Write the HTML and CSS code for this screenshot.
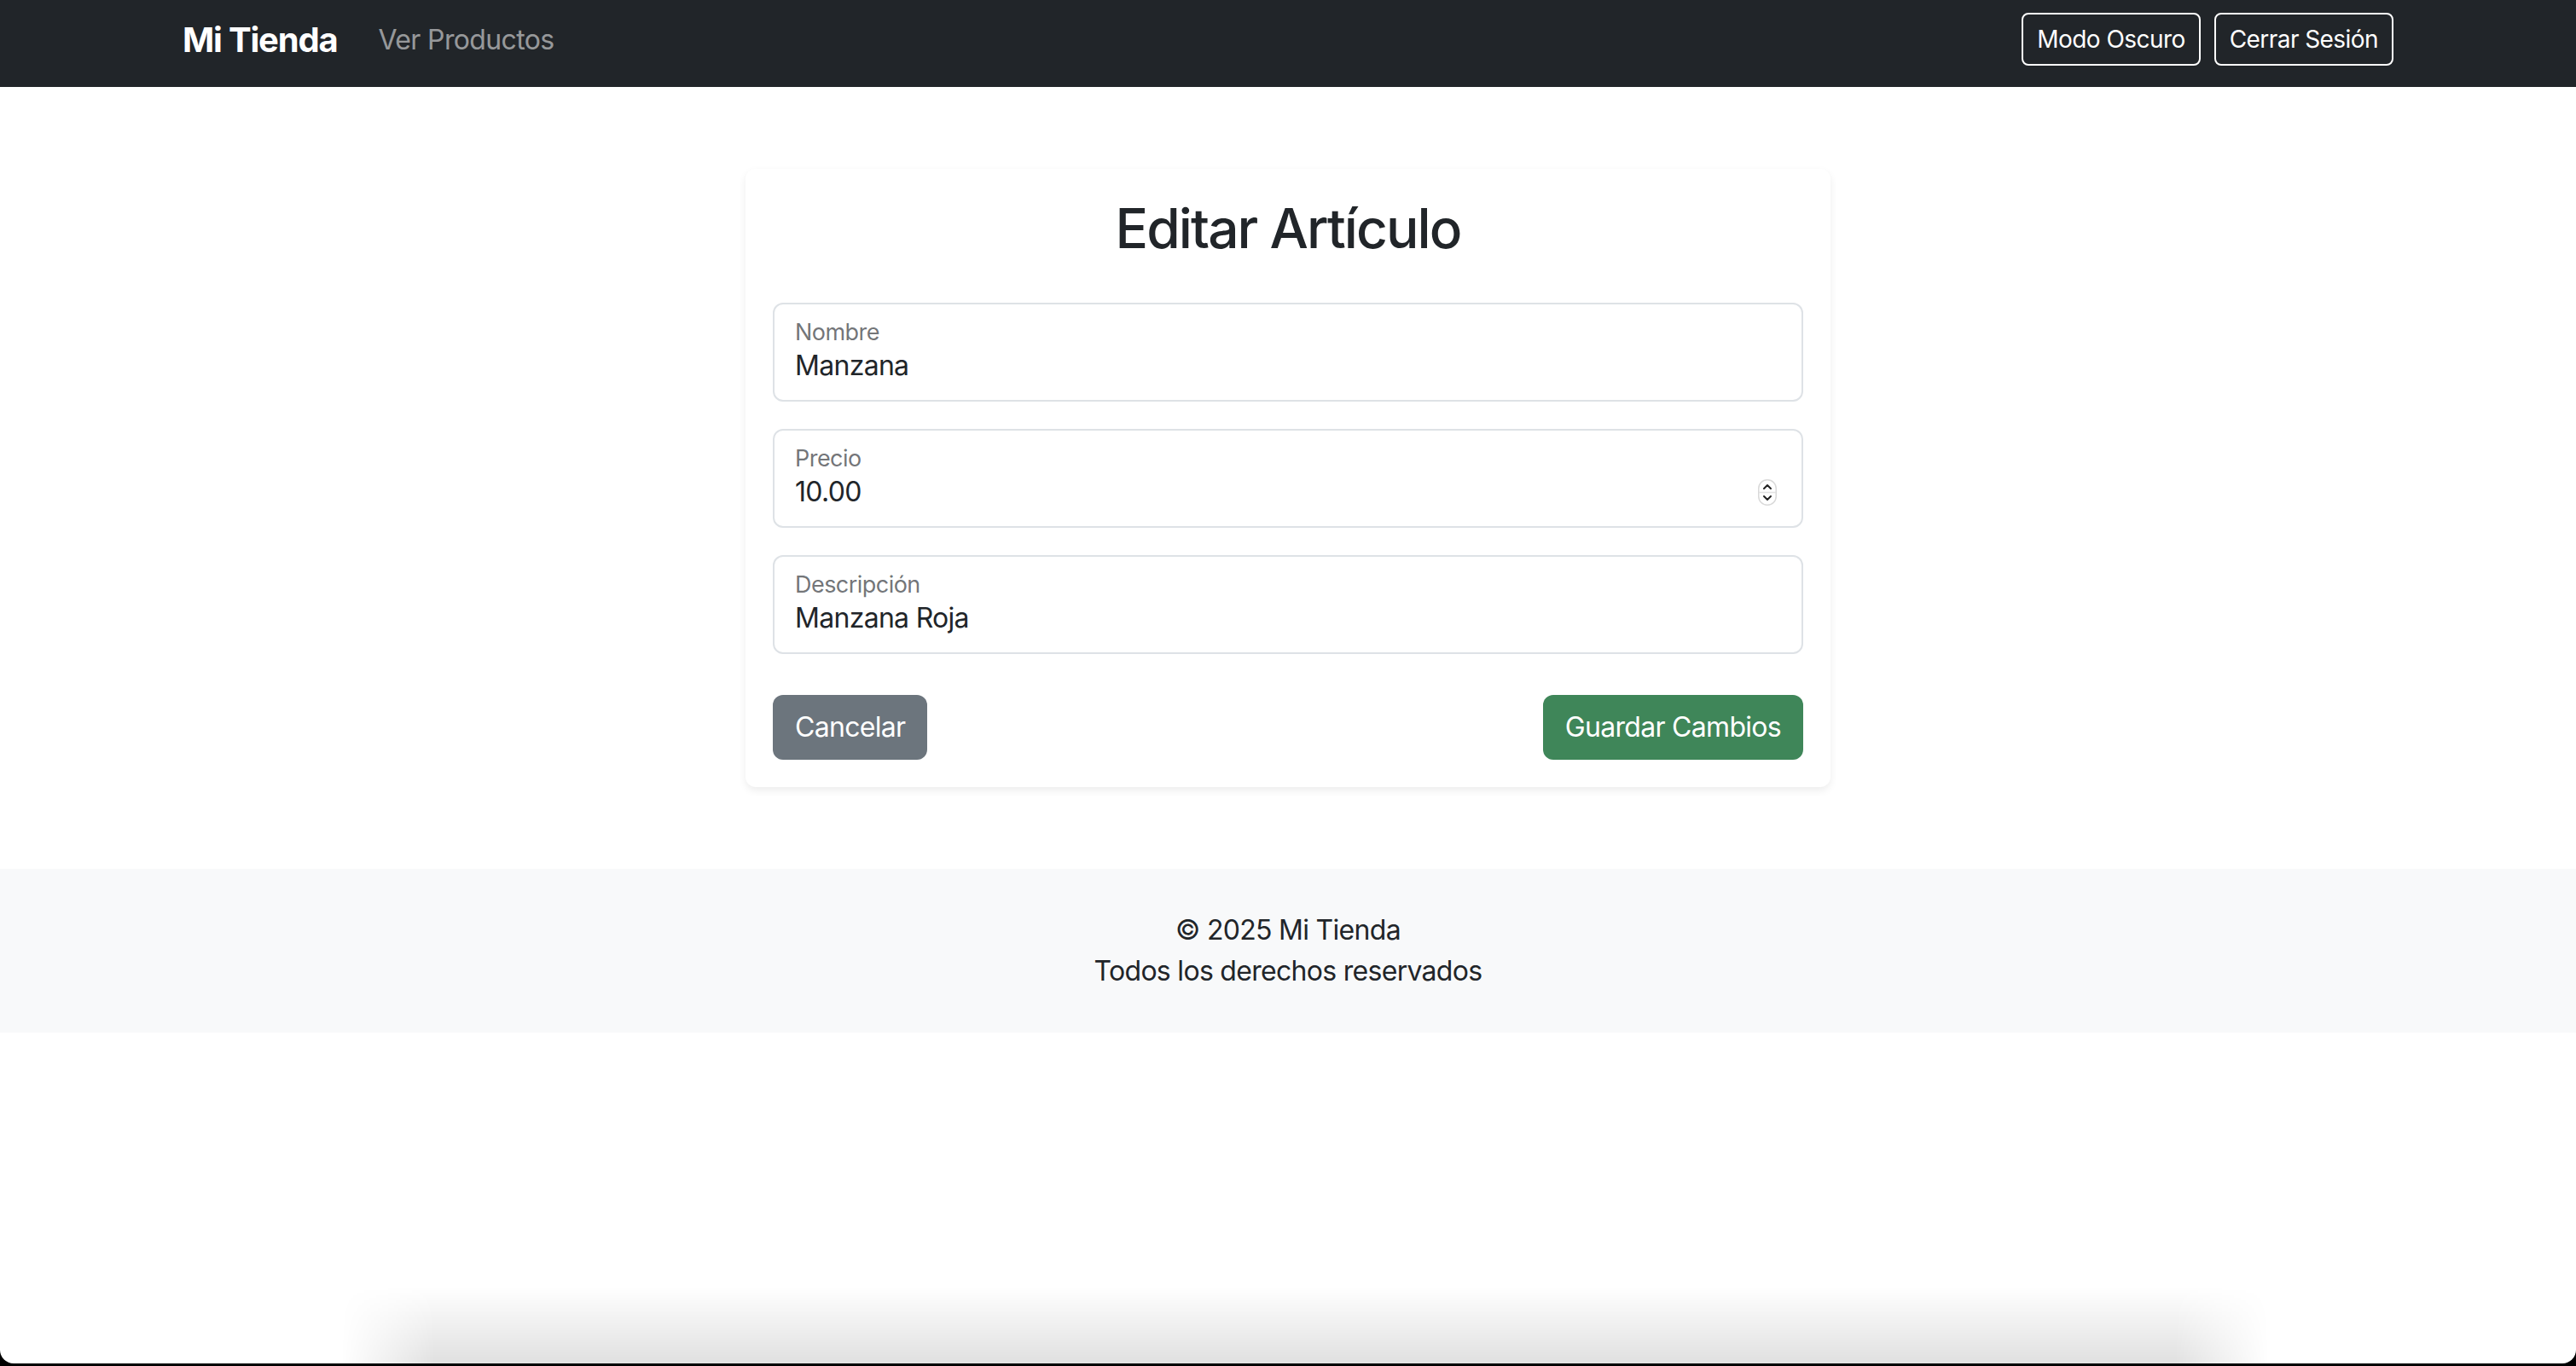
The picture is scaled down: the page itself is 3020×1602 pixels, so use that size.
FILE: index.html
```html
<!DOCTYPE html>
<html lang="es">
<head>
<meta charset="utf-8">
<title>Editar Artículo - Mi Tienda</title>
<link rel="stylesheet" href="styles.css">
</head>
<body>
<nav class="navbar">
  <div class="container nav-inner">
    <div class="nav-left">
      <a class="brand" href="#">Mi Tienda</a>
      <a class="nav-link" href="#">Ver Productos</a>
    </div>
    <div class="nav-right">
      <button class="btn-outline" type="button">Modo Oscuro</button>
      <button class="btn-outline" type="button">Cerrar Sesión</button>
    </div>
  </div>
</nav>

<main class="container main">
  <div class="card">
    <h2 class="card-title">Editar Artículo</h2>
    <form class="form">
      <div class="field">
        <input class="field-input" type="text" id="nombre" value="Manzana">
        <label class="field-label" for="nombre">Nombre</label>
      </div>
      <div class="field">
        <input class="field-input" type="number" id="precio" value="10.00" step="0.01">
        <label class="field-label" for="precio">Precio</label>
        <span class="spinner" aria-hidden="true">
          <svg width="22" height="31" viewBox="0 0 22 31">
            <rect x="0.75" y="0.75" width="20.5" height="29.5" rx="10" fill="#fff" stroke="#d9d9d9" stroke-width="1.5"/>
            <line x1="1" y1="15.5" x2="21" y2="15.5" stroke="#e2e2e2" stroke-width="1.5"/>
            <path d="M7 11 L11 7 L15 11" fill="none" stroke="#222" stroke-width="2" stroke-linecap="round" stroke-linejoin="round"/>
            <path d="M7 20 L11 24 L15 20" fill="none" stroke="#222" stroke-width="2" stroke-linecap="round" stroke-linejoin="round"/>
          </svg>
        </span>
      </div>
      <div class="field">
        <input class="field-input" type="text" id="descripcion" value="Manzana Roja">
        <label class="field-label" for="descripcion">Descripción</label>
      </div>
      <div class="actions">
        <button class="btn btn-secondary" type="button">Cancelar</button>
        <button class="btn btn-success" type="submit">Guardar Cambios</button>
      </div>
    </form>
  </div>
</main>

<footer class="footer">
  <p class="footer-line">© 2025 Mi Tienda</p>
  <p class="footer-line">Todos los derechos reservados</p>
</footer>

<div class="screen-edge"><div class="screen-edge-inner"></div></div>
<div class="screen-shadow"></div>
</body>
</html>
```

FILE: styles.css
```css
* { box-sizing: border-box; }

html, body {
  margin: 0;
  padding: 0;
  background: #fff;
  color: #212529;
  font-family: Inter, "Noto Sans", "Liberation Sans", sans-serif;
  font-size: 32px;
  line-height: 1.5;
  letter-spacing: -0.022em;
}

.container {
  width: 2640px;
  margin: 0 auto;
  padding: 0 24px;
}

/* Navbar */
.navbar {
  background: #212529;
  height: 102px;
}
.nav-inner {
  height: 100%;
  display: flex;
  align-items: center;
  justify-content: space-between;
  padding-bottom: 10px;
}
.nav-left {
  display: flex;
  align-items: center;
  padding-top: 2px;
}
.brand {
  color: #fff;
  font-size: 40px;
  font-weight: 700;
  text-decoration: none;
  letter-spacing: -0.03em;
}
.nav-link {
  margin-left: 48px;
  color: rgba(255, 255, 255, 0.55);
  font-size: 32px;
  text-decoration: none;
  letter-spacing: -0.02em;
}
.nav-right {
  display: flex;
  gap: 16px;
}
.btn-outline {
  height: 62px;
  padding: 0 16px;
  background: transparent;
  color: #fff;
  border: 2px solid #fff;
  border-radius: 8px;
  font-family: inherit;
  font-size: 28px;
  letter-spacing: -0.02em;
}

/* Main */
.main {
  padding-top: 96px;
}
.card {
  width: 1272px;
  margin: 0 auto;
  background: #fff;
  border-radius: 12px;
  box-shadow: 0 4px 10px rgba(0, 0, 0, 0.075);
  padding: 32px;
}
.card-title {
  margin: 0 0 48px;
  text-align: center;
  font-size: 64px;
  font-weight: 500;
  line-height: 1.2;
  letter-spacing: -0.03em;
}
.form {
  display: flex;
  flex-direction: column;
}
.field {
  position: relative;
  margin-bottom: 32px;
}
.field-input {
  display: block;
  width: 100%;
  height: 116px;
  border: 2px solid #dee2e6;
  border-radius: 12px;
  padding: 48px 24px 16px;
  font-family: inherit;
  font-size: 32px;
  line-height: 48px;
  letter-spacing: -0.022em;
  color: #212529;
  background: #fff;
  outline: none;
  -moz-appearance: textfield;
}
.field-input::-webkit-outer-spin-button,
.field-input::-webkit-inner-spin-button {
  -webkit-appearance: none;
  margin: 0;
}
.field-label {
  position: absolute;
  top: 15px;
  left: 26px;
  font-size: 27px;
  line-height: 40px;
  letter-spacing: -0.02em;
  color: rgba(33, 37, 41, 0.65);
  pointer-events: none;
}
.spinner {
  position: absolute;
  top: 59px;
  right: 31px;
  width: 22px;
  height: 31px;
  display: flex;
}

.actions {
  display: flex;
  justify-content: space-between;
  margin-top: 16px;
}
.btn {
  height: 76px;
  padding: 0 24px;
  border: 2px solid transparent;
  border-radius: 12px;
  color: #fff;
  font-family: inherit;
  font-size: 32px;
  letter-spacing: -0.022em;
}
.btn-secondary { background: #6c757d; }
.btn-success { background: #3f8659; }

/* Footer */
.footer {
  margin-top: 96px;
  background: #f8f9fa;
  padding: 48px 0;
  text-align: center;
}
.footer-line {
  margin: 0;
  line-height: 48px;
}

/* Bottom screen edge */
.screen-edge {
  position: fixed;
  left: 0;
  right: 0;
  bottom: 0;
  height: 20px;
  background: #000;
}
.screen-edge-inner {
  height: 17px;
  background: #fff;
  border-radius: 0 0 16px 16px;
}
.screen-shadow {
  position: fixed;
  left: 400px;
  right: 360px;
  bottom: 3px;
  height: 90px;
  background: linear-gradient(to bottom, rgba(0, 0, 0, 0), rgba(0, 0, 0, 0.12));
  -webkit-mask-image: linear-gradient(to right, transparent, #000 110px, #000 calc(100% - 110px), transparent);
  mask-image: linear-gradient(to right, transparent, #000 110px, #000 calc(100% - 110px), transparent);
  pointer-events: none;
}
```
